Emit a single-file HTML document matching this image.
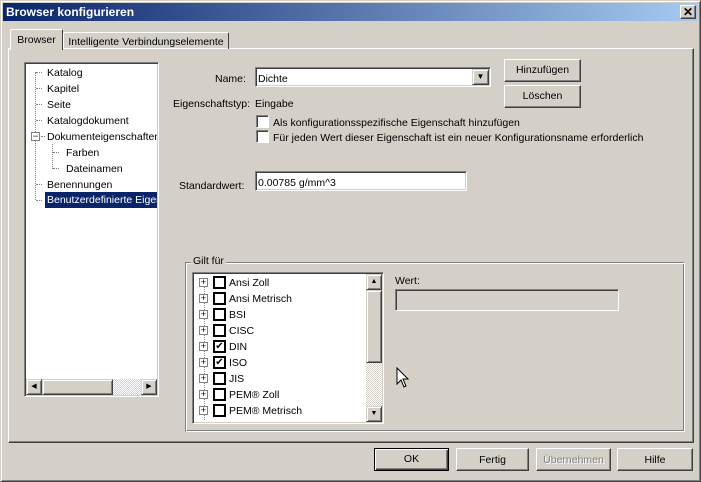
<!DOCTYPE html>
<html><head><meta charset="utf-8"><style>
*{box-sizing:border-box;margin:0;padding:0}
body{width:701px;height:482px;overflow:hidden;background:#d4d0c8;font-family:"Liberation Sans",Arial,sans-serif;font-size:10.5px;color:#000;position:relative}
.a{position:absolute;white-space:nowrap;padding-top:2px}
.sunk{position:absolute;background:#fff;border:1px solid;border-color:#808080 #fff #fff #808080;box-shadow:inset 1px 1px 0 #404040,inset -1px -1px 0 #d4d0c8}
.btn{position:absolute;background:#d4d0c8;border:1px solid;border-color:#fff #404040 #404040 #fff;box-shadow:inset -1px -1px 0 #808080;text-align:center;line-height:23px}
.cb{position:absolute;width:13px;height:13px;background:#fff;border:1px solid;border-color:#808080 #fff #fff #808080;box-shadow:inset 1px 1px 0 #404040}
.sb{position:absolute;background:#d4d0c8;border:1px solid;border-color:#d4d0c8 #404040 #404040 #d4d0c8;box-shadow:inset 1px 1px 0 #fff,inset -1px -1px 0 #808080}
.pl{position:absolute;width:9px;height:9px;border:1px solid #808080;background:#fff;font-size:9px;line-height:7px;text-align:center;color:#000}
.bc{position:absolute;width:13px;height:13px;border:2px solid #000;background:#fff}
.dot{position:absolute;border-top:1px dotted #808080;width:6px}
</style></head><body>
<div class="a" style="left:0;top:0;width:701px;height:482px;border:1px solid;border-color:#d4d0c8 #404040 #404040 #d4d0c8;box-shadow:inset 1px 1px 0 #fff,inset -1px -1px 0 #808080"></div>
<div class="a" style="left:3px;top:3px;width:695px;height:18px;background:linear-gradient(90deg,#0a246a,#a6caf0);color:#fff;font-weight:bold;font-size:12px;line-height:18px;padding:0 0 0 3px">Browser konfigurieren</div>
<div class="btn" style="left:680px;top:5px;width:16px;height:14px;line-height:12px;font-weight:bold;font-size:12px">✕</div>

<div class="a" style="left:8px;top:48px;width:686px;height:395px;border:1px solid;border-color:#fff #404040 #404040 #fff;box-shadow:inset -1px -1px 0 #808080"></div>
<div class="a" style="left:10px;top:29px;width:53px;height:21px;background:#d4d0c8;border:1px solid;border-color:#fff #404040 transparent #fff;border-bottom:none;text-align:center;line-height:18px;padding:1px 0 0;border-radius:2px 2px 0 0">Browser</div>
<div class="a" style="left:63px;top:32px;width:166px;height:17px;border:1px solid;border-color:#fff #404040 transparent #fff;border-bottom:none;text-align:center;line-height:16px;padding:1px 0 0;border-radius:2px 2px 0 0">Intelligente Verbindungselemente</div>

<div class="sunk" style="left:24px;top:62px;width:135px;height:335px"></div>
<div class="a" style="left:35px;top:72px;height:128px;border-left:1px dotted #808080"></div>
<div class="a" style="left:52px;top:144px;height:25px;border-left:1px dotted #808080"></div>
<div class="dot" style="left:36px;top:72px"></div><div class="a" style="left:47px;top:65px">Katalog</div>
<div class="dot" style="left:36px;top:88px"></div><div class="a" style="left:47px;top:81px">Kapitel</div>
<div class="dot" style="left:36px;top:104px"></div><div class="a" style="left:47px;top:97px">Seite</div>
<div class="dot" style="left:36px;top:120px"></div><div class="a" style="left:47px;top:113px">Katalogdokument</div>
<div class="pl" style="left:31px;top:132px">−</div><div class="dot" style="left:41px;top:136px;width:4px"></div><div class="a" style="left:47px;top:129px;width:110px;overflow:hidden">Dokumenteigenschaften</div>
<div class="dot" style="left:53px;top:152px"></div><div class="a" style="left:66px;top:145px">Farben</div>
<div class="dot" style="left:53px;top:168px"></div><div class="a" style="left:66px;top:161px">Dateinamen</div>
<div class="dot" style="left:36px;top:184px"></div><div class="a" style="left:47px;top:177px">Benennungen</div>
<div class="dot" style="left:36px;top:200px"></div><div class="a" style="left:45px;top:192px;width:112px;height:16px;background:#0a246a;color:#fff;padding:1px 0 0 2px;line-height:14px;overflow:hidden">Benutzerdefinierte Eigenschaften</div>
<div class="a" style="left:26px;top:379px;width:131px;height:16px;background:repeating-conic-gradient(#fff 0 25%,#d4d0c8 0 50%) 0 0/2px 2px"></div>
<div class="sb" style="left:26px;top:379px;width:16px;height:16px;font-size:7px;text-align:center;line-height:14px">◀</div>
<div class="sb" style="left:42px;top:379px;width:71px;height:16px"></div>
<div class="sb" style="left:141px;top:379px;width:16px;height:16px;font-size:7px;text-align:center;line-height:14px">▶</div>

<div class="a" style="left:215px;top:71px">Name:</div>
<div class="sunk" style="left:255px;top:67px;width:236px;height:20px"></div>
<div class="a" style="left:258px;top:71px">Dichte</div>
<div class="sb" style="left:472px;top:69px;width:17px;height:16px;font-size:8px;text-align:center;line-height:14px">▼</div>
<div class="btn" style="left:504px;top:59px;width:77px;height:23px;line-height:20px">Hinzufügen</div>
<div class="btn" style="left:504px;top:85px;width:77px;height:23px;line-height:21px">Löschen</div>
<div class="a" style="left:173px;top:96px">Eigenschaftstyp:</div>
<div class="a" style="left:255px;top:96px">Eingabe</div>
<div class="cb" style="left:256px;top:115px"></div><div class="a" style="left:273px;top:115px">Als konfigurationsspezifische Eigenschaft hinzufügen</div>
<div class="cb" style="left:256px;top:130px"></div><div class="a" style="left:273px;top:130px">Für jeden Wert dieser Eigenschaft ist ein neuer Konfigurationsname erforderlich</div>
<div class="a" style="left:179px;top:178px">Standardwert:</div>
<div class="sunk" style="left:255px;top:171px;width:212px;height:20px"></div>
<div class="a" style="left:258px;top:175px">0.00785 g/mm^3</div>

<div class="a" style="left:185px;top:262px;width:500px;height:170px;border:1px solid;border-color:#808080 #fff #fff #808080;box-shadow:inset 1px 1px 0 #fff,inset -1px -1px 0 #808080"></div>
<div class="a" style="left:191px;top:254px;background:#d4d0c8;padding:1px 2px 0">Gilt für</div>
<div class="sunk" style="left:192px;top:272px;width:192px;height:152px"></div>
<div class="a" style="left:204px;top:282px;height:138px;border-left:1px dotted #808080"></div>
<div class="a" style="left:366px;top:290px;width:16px;height:116px;background:repeating-conic-gradient(#fff 0 25%,#d4d0c8 0 50%) 0 0/2px 2px"></div>
<div class="sb" style="left:366px;top:274px;width:16px;height:16px;font-size:7px;text-align:center;line-height:14px">▲</div>
<div class="sb" style="left:366px;top:290px;width:16px;height:73px"></div>
<div class="sb" style="left:366px;top:406px;width:16px;height:16px;font-size:7px;text-align:center;line-height:14px">▼</div>

<div class="pl" style="left:199px;top:278px">+</div><div class="bc" style="left:213px;top:276px"></div><div class="a" style="left:229px;top:275px">Ansi Zoll</div>
<div class="pl" style="left:199px;top:294px">+</div><div class="bc" style="left:213px;top:292px"></div><div class="a" style="left:229px;top:291px">Ansi Metrisch</div>
<div class="pl" style="left:199px;top:310px">+</div><div class="bc" style="left:213px;top:308px"></div><div class="a" style="left:229px;top:307px">BSI</div>
<div class="pl" style="left:199px;top:326px">+</div><div class="bc" style="left:213px;top:324px"></div><div class="a" style="left:229px;top:323px">CISC</div>
<div class="pl" style="left:199px;top:342px">+</div><div class="bc" style="left:213px;top:340px;font-size:10px;line-height:9px;text-align:center">✔</div><div class="a" style="left:229px;top:339px">DIN</div>
<div class="pl" style="left:199px;top:358px">+</div><div class="bc" style="left:213px;top:356px;font-size:10px;line-height:9px;text-align:center">✔</div><div class="a" style="left:229px;top:355px">ISO</div>
<div class="pl" style="left:199px;top:374px">+</div><div class="bc" style="left:213px;top:372px"></div><div class="a" style="left:229px;top:371px">JIS</div>
<div class="pl" style="left:199px;top:390px">+</div><div class="bc" style="left:213px;top:388px"></div><div class="a" style="left:229px;top:387px">PEM® Zoll</div>
<div class="pl" style="left:199px;top:406px">+</div><div class="bc" style="left:213px;top:404px"></div><div class="a" style="left:229px;top:403px">PEM® Metrisch</div>

<div class="a" style="left:395px;top:273px">Wert:</div>
<div class="a" style="left:395px;top:289px;width:224px;height:22px;border:1px solid;border-color:#808080 #fff #fff #808080;box-shadow:inset 1px 1px 0 #404040,inset -1px -1px 0 #d4d0c8"></div>
<svg style="position:absolute;left:396px;top:367px" width="14" height="22" viewBox="0 0 14 22"><path d="M1 1 L1 17 L5 13 L8 20 L10 19 L7 12 L12 12 Z" fill="#fff" stroke="#000" stroke-width="1"/></svg>

<div class="btn" style="left:374px;top:448px;width:75px;height:23px;border:1px solid #000;box-shadow:inset 1px 1px 0 #fff,inset -1px -1px 0 #404040,inset -2px -2px 0 #808080;line-height:21px">OK</div>
<div class="btn" style="left:456px;top:448px;width:73px;height:23px;line-height:22px">Fertig</div>
<div class="btn" style="left:536px;top:448px;width:75px;height:23px;color:#808080;text-shadow:1px 1px 0 #fff;line-height:22px">Übernehmen</div>
<div class="btn" style="left:617px;top:448px;width:76px;height:23px;line-height:22px">Hilfe</div>
</body></html>
